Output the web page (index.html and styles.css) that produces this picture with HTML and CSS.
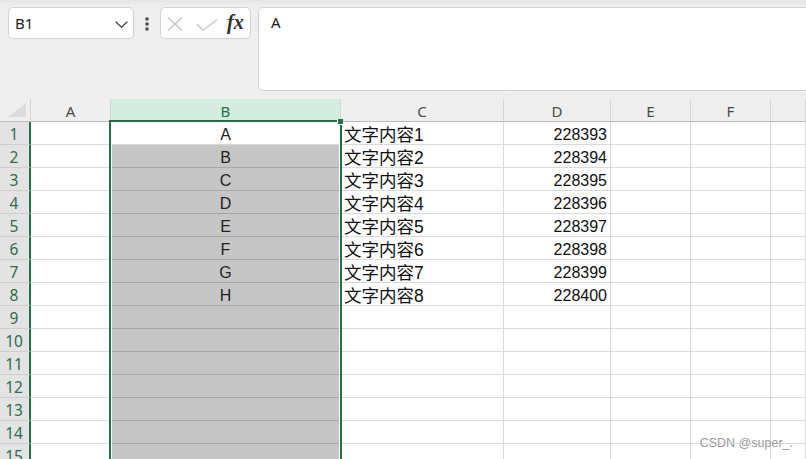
FILE: index.html
```html
<!DOCTYPE html>
<html lang="zh-CN">
<head>
<meta charset="utf-8">
<title>Sheet</title>
<link rel="stylesheet" href="styles.css">
</head>
<body>
<div class="app">
  <div class="toolbar">
    <div class="namebox">
      <span class="namebox-text">B1</span>
      <svg class="chevron" width="13" height="7" viewBox="0 0 13 7"><path d="M0.7 0.7 L6.5 6.2 L12.3 0.7" fill="none" stroke="#3a3a3a" stroke-width="1.2"/></svg>
    </div>
    <div class="kebab">
      <svg width="4" height="14" viewBox="0 0 4 14"><rect x="0.5" y="0.5" width="3" height="3" fill="#444"/><rect x="0.5" y="5.5" width="3" height="3" fill="#444"/><rect x="0.5" y="10.5" width="3" height="3" fill="#444"/></svg>
    </div>
    <div class="fxbtns">
      <svg class="icon-x" width="16" height="14" viewBox="0 0 16 14"><path d="M1 0.5 L15 13.5 M15 0.5 L1 13.5" stroke="#c2c2c2" stroke-width="1.3" fill="none"/></svg>
      <svg class="icon-check" width="22" height="12" viewBox="0 0 22 12"><path d="M0.8 5 L7 11.2 L21.2 0.6" stroke="#c2c2c2" stroke-width="1.3" fill="none"/></svg>
      <span class="fx">fx</span>
    </div>
    <div class="formula">A</div>
  </div>

  <div class="sheet">
    <div class="grid">
      <div class="hd corner"></div>
      <div class="hd">A</div>
      <div class="hd hd-sel">B</div>
      <div class="hd">C</div>
      <div class="hd">D</div>
      <div class="hd">E</div>
      <div class="hd">F</div>
      <div class="hd"></div>

      <div class="rh">1</div><div class="c"></div><div class="c b b-active">A</div><div class="c t">文字内容1</div><div class="c n">228393</div><div class="c"></div><div class="c"></div><div class="c"></div>
      <div class="rh">2</div><div class="c"></div><div class="c b">B</div><div class="c t">文字内容2</div><div class="c n">228394</div><div class="c"></div><div class="c"></div><div class="c"></div>
      <div class="rh">3</div><div class="c"></div><div class="c b">C</div><div class="c t">文字内容3</div><div class="c n">228395</div><div class="c"></div><div class="c"></div><div class="c"></div>
      <div class="rh">4</div><div class="c"></div><div class="c b">D</div><div class="c t">文字内容4</div><div class="c n">228396</div><div class="c"></div><div class="c"></div><div class="c"></div>
      <div class="rh">5</div><div class="c"></div><div class="c b">E</div><div class="c t">文字内容5</div><div class="c n">228397</div><div class="c"></div><div class="c"></div><div class="c"></div>
      <div class="rh">6</div><div class="c"></div><div class="c b">F</div><div class="c t">文字内容6</div><div class="c n">228398</div><div class="c"></div><div class="c"></div><div class="c"></div>
      <div class="rh">7</div><div class="c"></div><div class="c b">G</div><div class="c t">文字内容7</div><div class="c n">228399</div><div class="c"></div><div class="c"></div><div class="c"></div>
      <div class="rh">8</div><div class="c"></div><div class="c b">H</div><div class="c t">文字内容8</div><div class="c n">228400</div><div class="c"></div><div class="c"></div><div class="c"></div>
      <div class="rh">9</div><div class="c"></div><div class="c b"></div><div class="c"></div><div class="c"></div><div class="c"></div><div class="c"></div><div class="c"></div>
      <div class="rh">10</div><div class="c"></div><div class="c b"></div><div class="c"></div><div class="c"></div><div class="c"></div><div class="c"></div><div class="c"></div>
      <div class="rh">11</div><div class="c"></div><div class="c b"></div><div class="c"></div><div class="c"></div><div class="c"></div><div class="c"></div><div class="c"></div>
      <div class="rh">12</div><div class="c"></div><div class="c b"></div><div class="c"></div><div class="c"></div><div class="c"></div><div class="c"></div><div class="c"></div>
      <div class="rh">13</div><div class="c"></div><div class="c b"></div><div class="c"></div><div class="c"></div><div class="c"></div><div class="c"></div><div class="c"></div>
      <div class="rh">14</div><div class="c"></div><div class="c b"></div><div class="c"></div><div class="c"></div><div class="c"></div><div class="c"></div><div class="c"></div>
      <div class="rh">15</div><div class="c"></div><div class="c b"></div><div class="c"></div><div class="c"></div><div class="c"></div><div class="c"></div><div class="c"></div>
    </div>
    <div class="selection"></div>
    <div class="fill-handle"></div>
    <div class="watermark">CSDN @super_.</div>
  </div>
</div>
</body>
</html>
```

FILE: styles.css
```css
* { box-sizing: border-box; }

html, body {
  margin: 0;
  padding: 0;
  width: 806px;
  height: 459px;
  overflow: hidden;
  background: #ffffff;
  font-family: "Noto Sans", "Noto Sans CJK SC", sans-serif;
}

.app {
  width: 806px;
  height: 459px;
  overflow: hidden;
  display: flex;
  flex-direction: column;
}

/* ---------- toolbar ---------- */
.toolbar {
  height: 99px;
  flex: none;
  display: flex;
  align-items: flex-start;
  padding: 7px 0 0 8px;
  background: linear-gradient(#e4e4e4 0, #eeeeee 5px, #efefef 100%);
}

.namebox {
  width: 126px;
  height: 32px;
  background: #ffffff;
  border: 1px solid #d2d2d2;
  border-radius: 5px;
  display: flex;
  align-items: center;
  justify-content: space-between;
  padding: 0 5px 0 6px;
}

.namebox-text {
  font-size: 15px;
  color: #1a1a1a;
  line-height: 1;
  margin-top: 1px;
}

.chevron { display: block; margin-top: 2px; }

.kebab {
  width: 26px;
  height: 32px;
  display: flex;
  align-items: center;
  justify-content: center;
  padding-top: 2px;
}
.kebab svg { display: block; }

.fxbtns {
  width: 91px;
  height: 32px;
  background: #ffffff;
  border: 1px solid #d2d2d2;
  border-radius: 5px;
  display: flex;
  align-items: center;
  padding: 0 0 0 6px;
}

.icon-x { display: block; margin-top: 2px; }
.icon-check { display: block; margin-left: 13px; margin-top: 3px; }

.fx {
  margin-left: 9px;
  font-family: "Liberation Serif", "DejaVu Serif", serif;
  font-style: italic;
  font-weight: bold;
  font-size: 20px;
  color: #303030;
  line-height: 1;
  margin-top: -2px;
}

.formula {
  flex: 1;
  margin-left: 7px;
  margin-right: -12px;
  height: 84px;
  background: #ffffff;
  border: 1px solid #d2d2d2;
  border-radius: 5px;
  padding: 4px 12px;
  font-size: 15px;
  color: #1a1a1a;
  line-height: 20px;
}

/* ---------- sheet ---------- */
.sheet {
  position: relative;
  flex: 1;
  overflow: hidden;
}

.grid {
  display: grid;
  grid-template-columns: 31px 80px 230px 163px 107px 80px 80px 1fr;
  grid-auto-rows: 23px;
}

.hd {
  background: #efefef;
  border-right: 1px solid #d5d5d5;
  border-bottom: 1px solid #bcbcbc;
  display: flex;
  align-items: center;
  justify-content: center;
  font-size: 15px;
  color: #4a4a4a;
  padding-top: 1px;
}

.hd-sel {
  background: #d3ede0;
  color: #217346;
}

.corner {
  position: relative;
}
.corner::after {
  content: "";
  position: absolute;
  right: 4px;
  bottom: 4px;
  width: 18px;
  height: 14px;
  background: #dcdcdc;
  clip-path: polygon(100% 0, 100% 100%, 0 100%);
}

.rh {
  background: #e3e3e3;
  border-right: 2px solid #217346;
  border-bottom: 1px solid #cfcfcf;
  display: flex;
  align-items: center;
  justify-content: center;
  font-size: 15.5px;
  color: #2b6e4b;
  padding: 2px 1px 0 0;
}

.c {
  border-right: 1px solid #dadada;
  border-bottom: 1px solid #dadada;
  display: flex;
  align-items: center;
  font-family: "Liberation Sans", "Noto Sans CJK SC", sans-serif;
  font-size: 16px;
  color: #111111;
  white-space: nowrap;
  padding-top: 3px;
}

.b {
  background: #c6c6c6;
  border-bottom-color: #a8a8a8;
  justify-content: center;
  color: #222222;
}

.b-active {
  background: #ffffff;
  border-bottom-color: #dadada;
}

.t {
  padding-left: 3px;
  padding-top: 1px;
  font-size: 17.5px;
}

.n {
  justify-content: flex-end;
  padding-right: 3px;
}

/* selection overlay */
.selection {
  position: absolute;
  left: 109px;
  top: 21px;
  width: 233px;
  height: 400px;
  border: 2px solid #217346;
  box-shadow: inset 0 0 0 1px #ffffff;
  pointer-events: none;
}

.fill-handle {
  position: absolute;
  left: 337px;
  top: 20px;
  width: 6px;
  height: 6px;
  background: #217346;
  border: 1px solid #ffffff;
  border-top: none;
  border-right: none;
}

.watermark {
  position: absolute;
  right: 13px;
  bottom: 9px;
  font-family: "Liberation Sans", sans-serif;
  font-size: 12.5px;
  color: #9a9a9a;
  text-shadow: 0 0 2px #ffffff, 0 0 2px #ffffff;
}
```
